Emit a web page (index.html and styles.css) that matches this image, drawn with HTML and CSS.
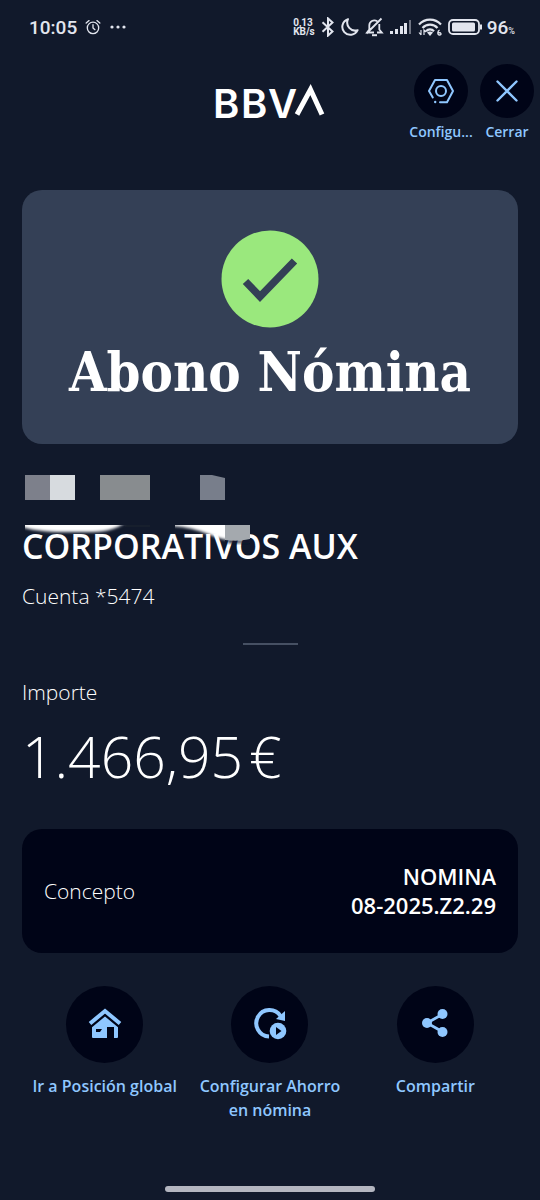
FILE: index.html
```html
<!DOCTYPE html>
<html lang="es">
<head>
<meta charset="utf-8">
<meta name="viewport" content="width=device-width, initial-scale=1">
<title>Abono Nómina</title>
<link rel="stylesheet" href="styles.css">
</head>
<body>
<div class="screen">
  <div class="status">
    <div class="status-left">
      <span class="clock">10:05</span>
      <svg width="16" height="16" viewBox="0 0 18 18" fill="none" stroke="currentColor" stroke-width="1.5" stroke-linecap="round"><circle cx="9" cy="10" r="6.4"/><path d="M9 6.5V10l2.2 2M1.3 4.6 4.6 1.8M16.7 4.6l-3.3-2.8"/></svg>
      <svg width="18" height="6" viewBox="0 0 18 6" fill="currentColor"><circle cx="3" cy="3" r="1.6"/><circle cx="9" cy="3" r="1.6"/><circle cx="15" cy="3" r="1.6"/></svg>
    </div>
    <div class="status-right">
      <span class="speed">0,13<br>KB/s</span>
      <svg width="14" height="20" viewBox="0 0 14 20" fill="none" stroke="currentColor" stroke-width="2"><path d="M1.5 5.2 11.5 14.6 7 18.6V1.4l4.500 4L1.500 14.800"/></svg>
      <svg width="18" height="20" viewBox="0 0 18 20" fill="none" stroke="currentColor" stroke-width="2" stroke-linejoin="round"><path d="M7 2.200A8 8 0 1 0 16.600 13.200 8 8 0 0 1 7 2.200z"/></svg>
      <svg width="19" height="20" viewBox="0 0 19 20" fill="none" stroke="currentColor" stroke-width="1.800"><path d="M12.300 4.200C8.500 2 4.300 4.500 4.300 8.500v4L2 15.500h7M14.300 7v5.500l2.500 3H12M16.500 1.500 1.500 16.500"/><path d="M7 18.200h5" stroke-width="2"/></svg>
      <svg width="22" height="16" viewBox="0 0 22 16" fill="currentColor"><rect y="12" width="3" height="3"/><rect x="5" y="10" width="3" height="5"/><rect x="10" y="7" width="3" height="8"/><rect x="14" y="4" width="3" height="11"/><rect x="19" y="1" width="2" height="14" opacity=".45"/></svg>
      <svg width="24" height="20" viewBox="0 0 24 20" fill="none" stroke="currentColor" stroke-width="2.200"><path d="M1 7.500c6-6.500 16-6.500 22 0M4.500 11c4-4.500 11-4.500 15 0M8 14.300c2.200-2.500 5.800-2.500 8 0"/><path d="m9 15.500 3 3.500 3-3.500c-1.500-1.500-4.500-1.500-6 0z" fill="currentColor" stroke="none"/><path d="M3 13v5M1 15.500 3 18M6 18v-5l2 2" stroke-width="1.200"/><path d="M21.500 13c-2 1-2.500 5 0 5s2-3-1.500-2" stroke-width="1.300"/></svg>
      <svg width="35" height="16" viewBox="0 0 35 16"><rect x="1" y="1" width="30" height="14" rx="4" fill="none" stroke="currentColor" stroke-width="1.800"/><rect x="4" y="3.500" width="23" height="9" rx="1.500" fill="currentColor"/><path d="M33 5.500v5" stroke="currentColor" stroke-width="2"/></svg>
      <span class="battery">96<small>%</small></span>
    </div>
  </div>

  <header class="header">
    <svg class="logo" width="116" height="64" viewBox="0 0 116 64" role="img" aria-label="BBVA"><text class="logo-text" y="46" x="1 29 56">BBV</text><path d="M85 42.500 98.500 17.500 110 42.500" fill="none" stroke="#fff" stroke-width="5"/></svg>
    <nav class="header-actions">
      <button class="tool">
        <span class="tool-disc"><svg width="28" height="28" viewBox="0 0 28 28" fill="none" stroke="currentColor" stroke-width="2" stroke-linejoin="round" stroke-linecap="round"><path d="M5.800 20.500 2 14 8 3h12l6 11-6 11.200h-7"/><circle cx="14" cy="14" r="5"/><circle cx="8.200" cy="25" r="1.200" fill="currentColor" stroke="none"/></svg></span>
        <span class="tool-label">Configu...</span>
      </button>
      <button class="tool">
        <span class="tool-disc"><svg width="24" height="24" viewBox="0 0 24 24" fill="none" stroke="currentColor" stroke-width="2.400" stroke-linecap="round"><path d="m2.500 2.500 19 19M21.500 2.500l-19 19"/></svg></span>
        <span class="tool-label">Cerrar</span>
      </button>
    </nav>
  </header>

  <main class="content">
    <section class="hero">
      <svg width="98" height="98" viewBox="0 0 98 98"><circle cx="49" cy="49" r="48.500" fill="#9ae87d"/><path d="m24.500 51.500 14.500 15L73.500 31" fill="none" stroke="#344056" stroke-width="7.500"/></svg>
      <h1 class="hero-title">Abono Nómina</h1>
    </section>

    <section class="payer">
      <h2 class="payer-name">CORPORATIVOS AUX</h2>
      <p class="text">Cuenta *5474</p>
      <svg class="redaction" width="250" height="80" viewBox="0 0 250 80" aria-hidden="true">
        <defs>
          <filter id="soft" x="-10%" y="-50%" width="120%" height="200%"><feGaussianBlur stdDeviation="1.500"/></filter>
          <clipPath id="band"><path d="M3 55h225v25H3z"/></clipPath>
          <clipPath id="wedge"><path d="M153 55h50v25h-50z"/></clipPath>
        </defs>
        <path fill="#7d808b" d="M3 5h25v25H3z"/><path fill="#d7dbdf" d="M28 5h25v25H28z"/><path fill="#888c8f" d="M78 5h50v25H78z"/><path fill="#787e8b" d="M178 5h12l13 3v22h-25z"/>
        <path fill="#171f2d" d="M103 55h25v2h-25z"/>
        <g clip-path="url(#band)">
          <path d="M0 50h106c-14 13-32 12-46 12S18 63 0 57z" fill="#fff" filter="url(#soft)"/>
          <path d="M206 69c7 2 14 2 22 1v3h-22z" fill="#11192b" filter="url(#soft)"/>
          <path d="M203 55h25v14c-10 2-16 2-25 1z" fill="#a4a9ae"/>
        </g>
        <g clip-path="url(#wedge)"><path d="M150 48h60v22c-18 0-28-12-60-14z" fill="#fff" filter="url(#soft)"/></g>
      </svg>
    </section>

    <hr class="divider">

    <section class="amount">
      <p class="text">Importe</p>
      <p class="amount-value"><span>1.466,95</span><span>€</span></p>
    </section>

    <dl class="detail">
      <dt class="text">Concepto</dt>
      <dd class="detail-value">NOMINA<br>08-2025.Z2.29</dd>
    </dl>

    <nav class="actions">
      <button class="action">
        <span class="action-disc"><svg width="34" height="32" viewBox="0 0 34 32"><path d="M2 16.500 17 4l15 12.500" fill="none" stroke="currentColor" stroke-width="4"/><path fill="currentColor" fill-rule="evenodd" d="m17 9.500 13 10.700V30q0 1-1 1h-3V20h-7v11H5q-1 0-1-1v-9.800zM8 22v3h4l2-3z"/></svg></span>
        <span class="action-label">Ir a Posición global</span>
      </button>
      <button class="action">
        <span class="action-disc"><svg width="34" height="34" viewBox="0 0 34 34"><path d="M16 30.500A13.200 13.200 0 1 1 27.500 10" fill="none" stroke="currentColor" stroke-width="4"/><path d="M32 5v10l-9-2z" fill="currentColor"/><circle cx="25" cy="25" r="8.300" fill="currentColor"/><path d="M23 21v8l5.500-4z" fill="#000417"/></svg></span>
        <span class="action-label">Configurar Ahorro en nómina</span>
      </button>
      <button class="action">
        <span class="action-disc"><svg width="30" height="30" viewBox="0 0 30 30" fill="currentColor"><path d="M23 6 7 15l16 9" fill="none" stroke="currentColor" stroke-width="2.800"/><circle cx="22.500" cy="6" r="5"/><circle cx="7" cy="15" r="5"/><circle cx="22.500" cy="24" r="5"/></svg></span>
        <span class="action-label">Compartir</span>
      </button>
    </nav>
  </main>
  <div class="home-bar"></div>
</div>
</body>
</html>
```

FILE: styles.css
```css
* { box-sizing: border-box; }

body {
  margin: 0;
  background: #11192b;
  color: #fff;
  font-family: "Open Sans", sans-serif;
}

h1, h2, p, dl, dd { margin: 0; }
svg { display: block; flex: none; }

button {
  padding: 0;
  border: 0;
  background: none;
  color: #8fc7ff;
  font: inherit;
  cursor: pointer;
}

.screen {
  min-height: 100vh;
  display: flex;
  flex-direction: column;
}

.status {
  height: 54px;
  padding: 0 25px 0 29px;
  display: flex;
  align-items: center;
  justify-content: space-between;
  color: #e2e5ee;
  font-family: Roboto, sans-serif;
}

.status-left { display: flex; align-items: center; gap: 8px; }
.clock { font-size: 19px; font-weight: 500; }

.status-right { display: flex; align-items: center; gap: 6px; }
.speed { font-size: 10px; line-height: 9px; font-weight: 700; }
.battery { font-size: 19px; font-weight: 500; margin-left: -2px; }
.battery small { font-size: 9px; }

.header {
  display: grid;
  grid-template-columns: 1fr auto 1fr;
  align-items: start;
  padding-top: 10px;
}

.logo { grid-column: 2; margin-top: 8px; overflow: visible; }
.logo-text { font: 600 40px Inter, sans-serif; fill: #fff; }

.header-actions { display: flex; justify-content: flex-end; }
.tool {
  width: 66px;
  display: flex;
  flex-direction: column;
  align-items: center;
  gap: 4px;
}
.tool-disc, .action-disc {
  display: grid;
  place-items: center;
  border-radius: 50%;
  background: #000417;
}
.tool-disc { width: 54px; height: 54px; }
.tool-label { font-size: 14px; line-height: 19px; font-weight: 600; }

.content {
  flex: 1;
  padding: 49px 22px 0;
}

.hero {
  display: flex;
  flex-direction: column;
  align-items: center;
  padding: 40px 16px 36px;
  border-radius: 20px;
  background: #344056;
}
.hero-title {
  margin-top: 8px;
  font: 700 54px/72px "DejaVu Serif Condensed", "DejaVu Serif", serif;
  text-align: center;
}

.payer { position: relative; padding-top: 80px; }
.payer-name { font-size: 34px; line-height: 44px; font-weight: 600; }
.payer .text { margin-top: 14px; }
.redaction { position: absolute; top: 26px; left: 0; }

.text { font-size: 21px; line-height: 28px; font-weight: 300; }

.divider {
  width: 55px;
  height: 2px;
  margin: 33px auto;
  border: 0;
  background: #465063;
}

.amount-value {
  display: flex;
  gap: 6px;
  margin-top: 14px;
  font-size: 57px;
  line-height: 72px;
  font-weight: 300;
}

.detail {
  display: flex;
  align-items: center;
  justify-content: space-between;
  margin-top: 37px;
  padding: 33px 22px;
  border-radius: 20px;
  background: #000417;
}
.detail-value {
  font-size: 22px;
  line-height: 29px;
  font-weight: 600;
  text-align: right;
}

.actions {
  display: grid;
  grid-template-columns: repeat(3, 1fr);
  margin-top: 33px;
}
.action {
  display: flex;
  flex-direction: column;
  align-items: center;
  gap: 11px;
}
.action-disc { width: 77px; height: 77px; padding-bottom: 3px; }
.action-label {
  padding: 0 5px;
  font-size: 16px;
  line-height: 24px;
  font-weight: 600;
  text-wrap: balance;
}

.home-bar {
  width: 210px;
  height: 6px;
  margin: 24px auto 8px;
  border-radius: 3px;
  background: #b4b6c0;
}
```
